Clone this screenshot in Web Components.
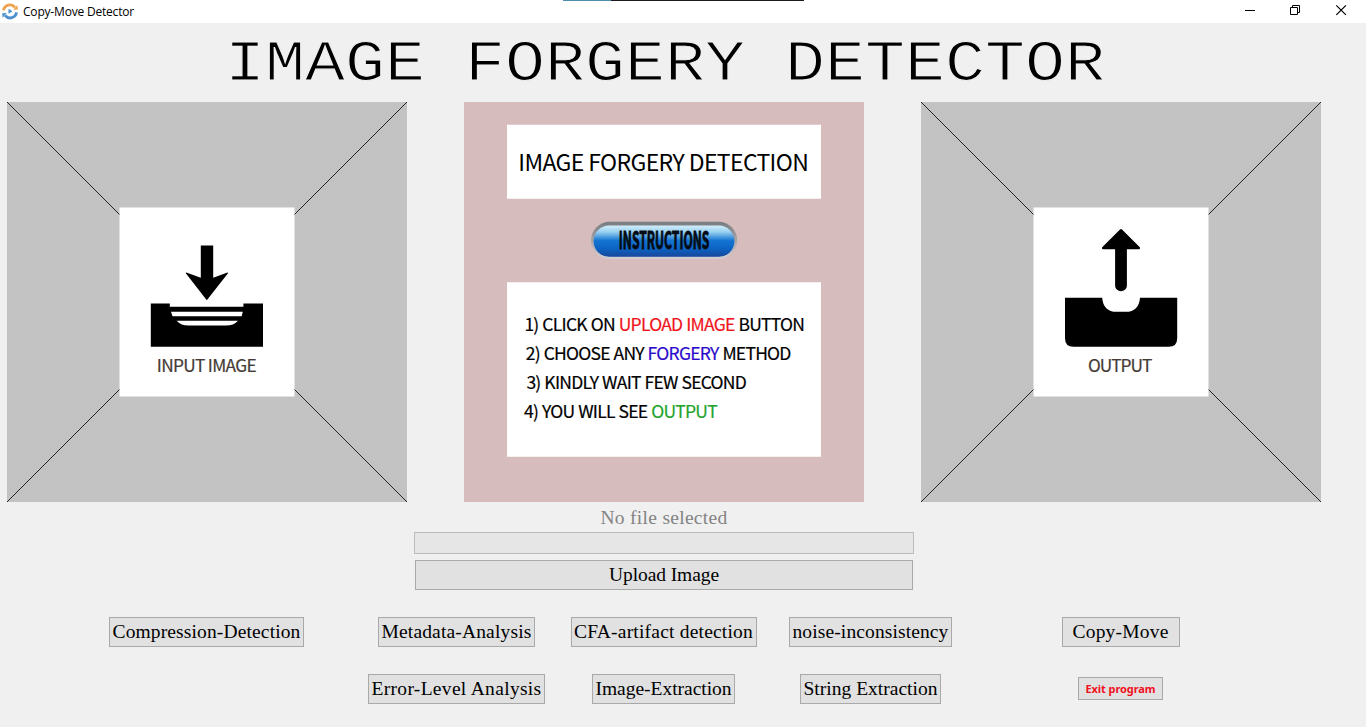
<!DOCTYPE html>
<html lang="en">
<head>
<meta charset="utf-8">
<title>Copy-Move Detector</title>
<style>
html,body{margin:0;height:100%;overflow:hidden;background:#f0f0f0}
</style>
</head>
<body>
<forgery-app></forgery-app>
<script>
const define = (name, markup, ready) => customElements.define(name, class extends HTMLElement {
  constructor() {
    super();
    this.attachShadow({ mode: 'open' }).innerHTML = markup;
  }
  connectedCallback() { if (ready) ready.call(this, this.shadowRoot); }
});

define('window-bar', `
<style>
:host{display:flex;height:23px;background:#fff;align-items:center;justify-content:space-between;position:relative;color:#000}
.name{display:flex;align-items:center;gap:5px;padding-left:2px}
.loader{position:absolute;left:563px;top:0;width:241px;height:1px;background:linear-gradient(90deg,#4f8cae 48px,#1c1a1f 48px)}
svg{display:block}
</style>
<div class="name">
  <svg width="16" height="17" viewBox="0 0 16 17" fill="none">
    <path d="M1.5 7.4A6.4 6.4 0 0 1 12.9 4.4" stroke="#eda24d" stroke-width="2.9"/>
    <path d="M11.2 6.9l4.6-.3-.4-4.6z" fill="#eda24d"/>
    <path d="M14.5 9.4A6.4 6.4 0 0 1 3.1 12.4" stroke="#4b90cc" stroke-width="2.9"/>
    <path d="M4.8 9.9l-4.6.3.4 4.6z" fill="#4b90cc"/>
    <path d="M6.5 5.8v5l4-2.5z" fill="#4b90cc"/>
  </svg>
  <slot></slot>
</div>
<div class="loader"></div>
<svg width="121" height="23" viewBox="0 0 121 23" fill="none" stroke="#000" stroke-width="1">
  <path d="M0 10.5h10M45.5 7.5h7v7h-7zM47.5 7.5v-2h7v7h-2"/>
  <path d="M91.3 5.3l9.6 9.6M100.9 5.3l-9.6 9.6" stroke-width="1.2"/>
</svg>`);

define('page-title', `
<style>
:host{display:block;box-sizing:border-box;width:880px;height:79px;padding-top:2px;margin-left:225px;font:66.67px/79px "Liberation Mono",monospace;color:#000;white-space:nowrap}
h1{margin:0;font:inherit;transform:scaleY(.87);-webkit-text-stroke:1.3px #f0f0f0}
</style><h1><slot></slot></h1>`);

define('fit-text', `
<style>:host{display:inline-block;white-space:nowrap}</style><span><slot></slot></span>`,
function (root) {
  const span = root.querySelector('span');
  const gap = (Number(this.getAttribute('width')) - span.getBoundingClientRect().width) / this.textContent.length;
  span.style.letterSpacing = gap + 'px';
});

define('tool-button', `
<style>
:host{display:block}
button{box-sizing:border-box;width:var(--w);height:var(--h,30px);padding:0;border:1px solid #a9a9a9;background:#e1e1e1;color:inherit;font:inherit;display:flex;align-items:center;justify-content:center}
</style><button><slot></slot></button>`);

const panelStyle = `
:host{display:block;width:400px;height:400px}
svg{display:block}
text{font-family:"Noto Sans CJK SC","Noto Sans",sans-serif}`;

const frame = `
  <rect width="400" height="400" fill="#c3c3c3"/>
  <path d="M0 0L400 400M400 0L0 400" stroke="#222" stroke-width="1"/>
  <rect x="112.5" y="105.5" width="175" height="189" fill="#fff"/>`;

define('input-panel', `<style>${panelStyle}</style>
<svg width="400" height="400">${frame}
  <g transform="translate(-7 -102)">
    <path d="M200.8 245.5h12.4v32.3l14.3-5.4q.9.3.3 1.2L206.8 300.2 186 273.6q-.6-.9.3-1.2l14.5 5.4z"/>
    <path d="M150.8 303.4h19v3.4h73.6v-3.4H263v43.4H150.8z"/>
    <path d="M171 311.7h71.8l-1.1 4.6h-69.2zM176.7 320.7h61.3q-4.3 4.9-12 4.9h-37.5q-7.5 0-11.8-4.9z" fill="#fff"/>
    <text x="156.8" y="371.8" font-size="17.3" fill="#453b36" stroke="#453b36" stroke-width=".2" textLength="99.8">INPUT IMAGE</text>
  </g>
</svg>`);

define('output-panel', `<style>${panelStyle}</style>
<svg width="400" height="400">${frame}
  <g transform="translate(-921 -102)">
    <path d="M1121 229q.6 0 1 .6l17.8 17.7q.7 1.9-1 1.9h-11.9v36.2a5.9 5.9 0 0 1-11.8 0v-36.2h-11.9q-1.7 0-1-1.9l17.8-17.7q.4-.6 1-.6z"/>
    <path d="M1065 297.7h37.2q1.1 14.1 14.3 14.1h9.2q13.2 0 14.3-14.1h37.2v40.5q0 8.6-8.6 8.6h-95q-8.6 0-8.6-8.6z"/>
    <text x="1088" y="371.8" font-size="17.3" fill="#453b36" stroke="#453b36" stroke-width=".2" textLength="64.3">OUTPUT</text>
  </g>
</svg>`);

define('guide-panel', `<style>${panelStyle}</style>
<svg width="400" height="400">
  <defs>
    <linearGradient id="blue" x2="0" y2="1"><stop stop-color="#d3edfa"/><stop offset=".2" stop-color="#9ad2f2"/><stop offset=".48" stop-color="#1474d2"/><stop offset=".75" stop-color="#0c62c2"/><stop offset="1" stop-color="#18469a"/></linearGradient>
    <linearGradient id="rim" x2="0" y2="1"><stop stop-color="#777c80"/><stop offset=".5" stop-color="#a7a4a8"/><stop offset="1" stop-color="#d2cfd5"/></linearGradient>
  </defs>
  <rect width="400" height="400" fill="#d7bcbd"/>
  <g transform="translate(-464 -102)">
    <path d="M507 124.7h314v74.1H507zM507 282.3h314v174.5H507z" fill="#fff"/>
    <text x="518.3" y="170.6" font-size="23" textLength="290.5">IMAGE FORGERY DETECTION</text>
    <rect x="591" y="221.8" width="146.2" height="37.2" rx="18.6" fill="url(#rim)"/>
    <rect x="593.6" y="225.6" width="140.8" height="31.2" rx="15.6" fill="url(#blue)"/>
    <text x="618.8" y="248.9" font-size="23.5" font-weight="700" fill="#050b14" stroke="#050b14" stroke-width=".9" textLength="90.6" lengthAdjust="spacingAndGlyphs">INSTRUCTIONS</text>
    <g font-size="17.5" word-spacing=".6">
      <text x="524.4" y="331.4" textLength="280.6" stroke="#000" stroke-width=".2">1) CLICK ON <tspan fill="#f0141b" stroke="#f0141b">UPLOAD IMAGE</tspan> BUTTON</text>
      <text x="525.8" y="360.4" textLength="265.6" stroke="#000" stroke-width=".2">2) CHOOSE ANY <tspan fill="#2b0bcb" stroke="#2b0bcb">FORGERY</tspan> METHOD</text>
      <text x="526.4" y="389.4" textLength="220.4" stroke="#000" stroke-width=".2">3) KINDLY WAIT FEW SECOND</text>
      <text x="524.1" y="418.4" textLength="193.6" stroke="#000" stroke-width=".2">4) YOU WILL SEE <tspan fill="#1ea42d" stroke="#1ea42d">OUTPUT</tspan></text>
    </g>
  </g>
</svg>`);

define('forgery-app', `
<style>
:host{display:flex;flex-direction:column;width:1366px;height:727px;background:#f0f0f0;font:19.5px/28px "Liberation Serif",serif;color:#000}
window-bar{font:12px/20px "Open Sans","Noto Sans",sans-serif}
.panels{display:flex;gap:57px;padding-left:7px}
.file{display:flex;flex-direction:column;align-items:center;width:1328px}
.status{color:#838383;height:30px;line-height:32px}
.progress{box-sizing:border-box;width:500px;height:22px;border:1px solid #bcbcbc;background:#e6e6e6;margin-bottom:6px}
.tools{display:grid;grid-template-columns:413px 87px 327px 87px 413px;grid-auto-rows:30px;row-gap:27px;margin-top:27px;justify-items:center;align-items:center}
.second{grid-column:2}
.exit{--w:85px;--h:23px;margin-bottom:1px;color:#f0101c;font:700 11px/20px "Noto Sans","Open Sans",sans-serif}
</style>
<window-bar><fit-text width="111">Copy-Move Detector</fit-text></window-bar>
<page-title>IMAGE FORGERY DETECTOR</page-title>
<div class="panels"><input-panel></input-panel><guide-panel></guide-panel><output-panel></output-panel></div>
<div class="file">
  <div class="status"><fit-text width="127">No file selected</fit-text></div>
  <div class="progress"></div>
  <tool-button style="--w:498px"><fit-text width="110">Upload Image</fit-text></tool-button>
</div>
<div class="tools">
  <tool-button style="--w:195px"><fit-text width="188">Compression-Detection</fit-text></tool-button>
  <tool-button style="--w:157px"><fit-text width="150">Metadata-Analysis</fit-text></tool-button>
  <tool-button style="--w:186px"><fit-text width="179">CFA-artifact detection</fit-text></tool-button>
  <tool-button style="--w:163px"><fit-text width="156">noise-inconsistency</fit-text></tool-button>
  <tool-button style="--w:118px"><fit-text width="96">Copy-Move</fit-text></tool-button>
  <tool-button class="second" style="--w:177px"><fit-text width="170">Error-Level Analysis</fit-text></tool-button>
  <tool-button style="--w:143px"><fit-text width="136">Image-Extraction</fit-text></tool-button>
  <tool-button style="--w:141px"><fit-text width="134">String Extraction</fit-text></tool-button>
  <tool-button class="exit"><fit-text width="70">Exit program</fit-text></tool-button>
</div>`);
</script>
</body>
</html>
